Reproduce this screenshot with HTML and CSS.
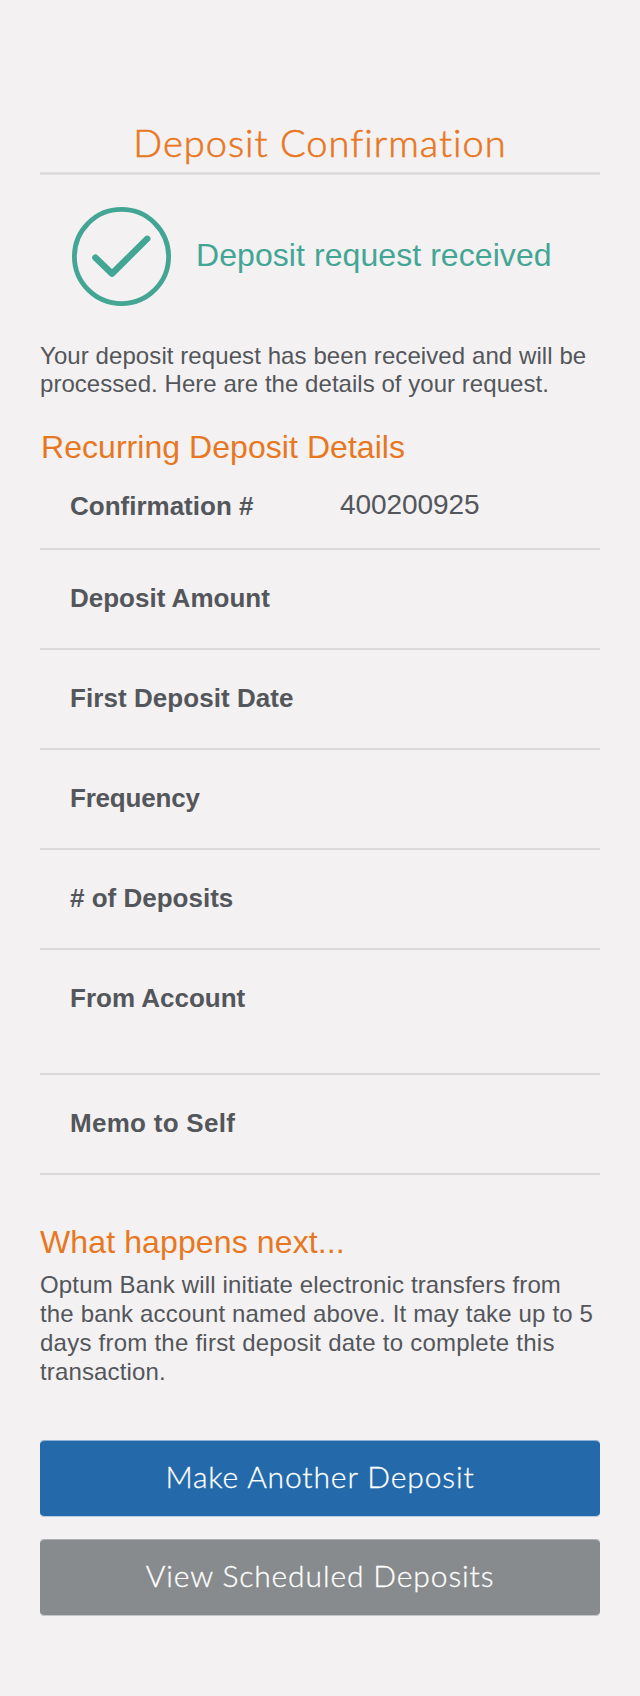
FILE: index.html
```
<!DOCTYPE html>
<html lang="en">
<head>
<meta charset="utf-8">
<title>Deposit Confirmation</title>
<link rel="stylesheet" href="styles.css">
</head>
<body>
<main class="page">
  <h1 class="title">Deposit Confirmation</h1>
  <section class="status">
    <svg class="status-icon" width="100" height="100" viewBox="0 0 100 100" fill="none" stroke="currentColor">
      <circle cx="49.5" cy="49.5" r="47.1" stroke-width="4.8"/>
      <path d="M23.4 50.6 40 66.6 75.2 31.8" stroke-width="6.4" stroke-linecap="round" stroke-linejoin="round"/>
    </svg>
    <p class="status-text">Deposit request received</p>
  </section>
  <p class="intro">Your deposit request has been received and will be<br><span class="snug">processed. Here are the details of your request.</span></p>
  <h2 class="heading details-heading">Recurring Deposit Details</h2>
  <dl class="details">
    <div class="row row-first"><dt class="label">Confirmation #</dt><dd class="value">400200925</dd></div>
    <div class="row"><dt class="label">Deposit Amount</dt><dd class="value"></dd></div>
    <div class="row"><dt class="label label-date">First Deposit Date</dt><dd class="value"></dd></div>
    <div class="row"><dt class="label label-frequency">Frequency</dt><dd class="value"></dd></div>
    <div class="row"><dt class="label"># of Deposits</dt><dd class="value"></dd></div>
    <div class="row row-tall"><dt class="label">From Account</dt><dd class="value"></dd></div>
    <div class="row"><dt class="label label-memo">Memo to Self</dt><dd class="value"></dd></div>
  </dl>
  <h2 class="heading next-heading">What happens next...</h2>
  <p class="next">Optum Bank will initiate electronic transfers from<br>the bank account named above. It may take up to 5<br><span class="loose">days from the first deposit date to complete this</span><br>transaction.</p>
  <div class="actions">
    <button class="button button-primary" type="button">Make Another Deposit</button>
    <button class="button button-secondary" type="button">View Scheduled Deposits</button>
  </div>
</main>
</body>
</html>
```
FILE: styles.css
```
* { box-sizing: border-box; margin: 0; padding: 0; }

body {
  background: #f3f1f2;
  color: #53565a;
  font-family: "Liberation Sans", Arial, sans-serif;
}

.page {
  min-height: 1696px;
  padding: 116px 40px 0;
}

.title {
  height: 59px;
  background: linear-gradient(#e2e1e1 0 1px, #d8d7d7 1px 2px, #e2e1e1 2px) bottom / 100% 3px no-repeat;
  color: #e87722;
  font: 300 38px/52px Lato, sans-serif;
  font-variant-ligatures: none;
  letter-spacing: 1.03px;
  text-align: center;
  -webkit-text-stroke: 0.6px currentColor;
}

.status {
  display: flex;
  gap: 24px;
  height: 100px;
  margin-top: 32px;
  padding-left: 32px;
  color: #43a694;
}

.status-icon { flex: none; }

.status-text {
  padding-top: 28px;
  font-size: 32px;
  line-height: 40px;
  letter-spacing: 0.07px;
  white-space: nowrap;
}

.intro {
  margin-top: 35px;
  font-size: 24px;
  line-height: 28px;
  letter-spacing: 0.083px;
  white-space: nowrap;
}

.snug { letter-spacing: 0.04px; }

.heading {
  color: #e87722;
  font-size: 32px;
  font-weight: 400;
  line-height: 40px;
}

.details-heading {
  margin-top: 29px;
  padding-left: 1px;
  letter-spacing: 0.05px;
}

.row {
  display: flex;
  height: 100px;
  padding: 33px 0 0 30px;
  border-bottom: 2px solid #dad9d7;
}

.row-first { height: 83px; padding-top: 24px; }
.row-tall { height: 125px; }

.label {
  width: 270px;
  font-size: 26px;
  font-weight: 700;
  line-height: 30px;
}

.label-date { letter-spacing: 0.06px; }
.label-frequency { letter-spacing: -0.2px; }
.label-memo { letter-spacing: 0.28px; }

.value {
  font-size: 28px;
  line-height: 28px;
  letter-spacing: -0.07px;
}

.next-heading {
  margin-top: 47px;
  letter-spacing: 0.12px;
}

.next {
  margin-top: 8px;
  font-size: 24px;
  line-height: 29px;
  letter-spacing: 0.15px;
  white-space: nowrap;
}

.loose { letter-spacing: 0.24px; }

.actions {
  display: grid;
  gap: 22px;
  margin-top: 54px;
}

.button {
  height: 77px;
  padding-bottom: 6px;
  border: solid;
  border-width: 1px 0;
  border-radius: 4px;
  color: #fff;
  font: 300 30px/36px Lato, sans-serif;
  letter-spacing: 0.88px;
  -webkit-text-stroke: 0.3px currentColor;
}

.button-primary {
  background: #246aab;
  border-color: #8fb3d2 transparent #b9cde0;
  background-clip: padding-box;
}

.button-secondary {
  background: #888b8d;
  border-color: #adafb0 transparent #c4c5c6;
  background-clip: padding-box;
}
```
